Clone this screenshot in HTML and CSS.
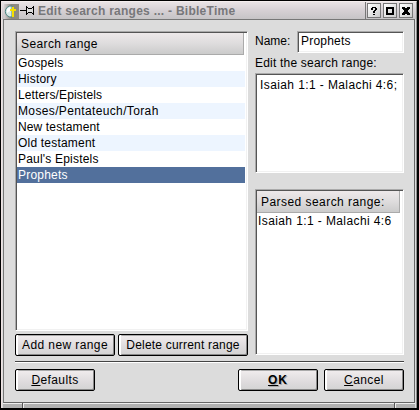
FILE: index.html
```html
<!DOCTYPE html>
<html lang="en">
<head>
<meta charset="utf-8">
<title>Edit search ranges ... - BibleTime</title>
<link rel="stylesheet" href="styles.css">
</head>
<body>
<div class="window">
  <header class="titlebar">
    <svg class="app-icon" width="15" height="15" viewBox="0 0 15 15"><defs><linearGradient id="g"><stop offset="0" stop-color="#d5d0d2"/><stop offset=".5" stop-color="#8a8880"/><stop offset="1" stop-color="#8d8a84"/></linearGradient></defs><path fill="url(#g)" d="M0 0h15v15H0z"/><path d="M8 2a5.6 5.6 0 1 0 0 11z" fill="#d9e9e7" stroke="#4d8583"/><path d="M3 5l3-2v4L3 9z" fill="#fff"/><path d="M8 3h2v10H8zM6 5h6v2H6z" fill="#f5df00" shape-rendering="crispEdges"/></svg>
    <svg class="pin" width="14" height="11" viewBox="0 0 14 11" shape-rendering="crispEdges"><path d="M0 5h6v1H0zM6 1h1v9H6zM7 2h1v1H7zM8 3h4v1H8zM7 8h1v1H7zM8 7h4v1H8zM12 2h1v1h-1zM12 8h1v1h-1zM13 1h1v9h-1z"/><path fill="#ddd" d="M7 4h6v3H7z"/></svg>
    <h1 class="title">Edit search ranges ... - BibleTime</h1>
    <div class="controls">
      <span class="control"><svg width="12" height="12" viewBox="0 0 12 12" shape-rendering="crispEdges"><path d="M4 2h4v1H4zM3 3h2v2H3zM7 3h2v2H7zM6 5h2v1H6zM5 6h2v2H5zM5 9h2v1H5z"/></svg></span>
      <span class="control"><svg width="12" height="12" viewBox="0 0 12 12" shape-rendering="crispEdges"><path fill-rule="evenodd" d="M2 2h8v8H2zM4 4v4h4V4z"/></svg></span>
      <span class="control"><svg width="12" height="12" viewBox="0 0 12 12" shape-rendering="crispEdges"><path d="M2 2h3v1h2V2h3v2H9v1H8v2h1v1h1v2H7V9H5v1H2V8h1V7h1V5H3V4H2z"/></svg></span>
    </div>
  </header>
  <main class="client">
    <div class="panels">
      <section class="left">
        <div class="sunken list ranges">
          <div class="list-head"><span class="t-head">Search range</span></div>
          <ul>
            <li><span class="t-gospels">Gospels</span></li>
            <li><span class="t-history">History</span></li>
            <li><span class="t-letters">Letters/Epistels</span></li>
            <li><span class="t-moses">Moses/Pentateuch/Torah</span></li>
            <li><span class="t-new">New testament</span></li>
            <li><span class="t-old">Old testament</span></li>
            <li><span class="t-paul">Paul's Epistels</span></li>
            <li class="selected"><span class="t-prophets">Prophets</span></li>
          </ul>
        </div>
        <div class="range-actions">
          <button class="button add"><span class="t-add">Add new range</span></button>
          <button class="button delete"><span class="t-delete">Delete current range</span></button>
        </div>
      </section>
      <section class="right">
        <div class="name-row"><span class="t-name">Name:</span><div class="sunken field"><span class="t-prophets">Prophets</span></div></div>
        <div class="edit-label"><span class="t-edit">Edit the search range:</span></div>
        <div class="sunken editor"><span class="t-isaiah">Isaiah 1:1 - Malachi 4:6;</span></div>
        <div class="sunken list parsed">
          <div class="list-head"><span class="t-parsed">Parsed search range:</span></div>
          <ul><li><span class="t-isaiah">Isaiah 1:1 - Malachi 4:6</span></li></ul>
        </div>
      </section>
    </div>
    <hr class="separator">
    <footer class="dialog-actions">
      <button class="button"><span class="t-defaults"><u>D</u>efaults</span></button>
      <button class="button ok"><span class="t-ok"><u>O</u>K</span></button>
      <button class="button"><span class="t-cancel"><u>C</u>ancel</span></button>
    </footer>
  </main>
  <div class="grip"><i></i><i></i><i></i></div>
</div>
</body>
</html>
```
FILE: styles.css
```css
* { box-sizing: border-box; }
body { margin: 0; background: #000; font: 12px/16px "Liberation Sans", Arial, sans-serif; color: #000; overflow: hidden; }
.window { width: 416px; height: 407px; margin: 1px 0 0 1px; background: #dcdcdc; border-left: 1px solid #eee2e2; border-top: 1px solid #f5eeee; border-right: 1px solid #8b8b8b; display: flex; flex-direction: column; }
.titlebar { height: 17px; flex: none; display: flex; align-items: center; background: linear-gradient(#e9e3e5, #d6d0d4 50%, #c6c4c6); padding-left: 2px; }
.app-icon { margin-top: 1px; }
.pin { margin: 0 4px 0 1px; }
.title { margin: 0; font-size: 12px; line-height: 16px; color: #77777a; letter-spacing: .26px; white-space: nowrap; }
.controls { margin-left: auto; height: 17px; border-left: 1px solid #777; display: flex; gap: 2px; padding: 1px 3px 0 1px; }
.control { width: 14px; height: 15px; border: 1px solid #777; background: linear-gradient(135deg, #fff, #ccc); display: flex; align-items: center; justify-content: center; }
.client { flex: 1; min-height: 0; margin: 0 1px 0 1px; border: 1px solid #777; border-right-color: #666; border-bottom-color: #666; padding: 11px 10px 0 11px; }
.panels { display: flex; justify-content: space-between; height: 325px; }
.left { width: 233px; }
.right { width: 149px; }
span { white-space: nowrap; }
.sunken { background: #fff; border: 1px solid #aaa; border-right-color: #fff; border-bottom-color: #fff; position: relative; box-shadow: inset 1px 1px #555, inset -1px -1px #f1f1f1; }
.list { padding: 1px 2px 2px 1px; }
.ranges { height: 300px; }
.list-head { height: 22px; margin-right: 1px; padding: 3px 0 0 4px; background: linear-gradient(#eee9ea, #dedcdd 50%, #cbcbcb); border-right: 1px solid #aaa; border-bottom: 1px solid #aaa; }
ul { list-style: none; margin: 0; padding: 0; }
li { height: 16px; padding-left: 1px; }
li:nth-child(even) { background: #edf5ff; }
li.selected { background: #52709c; color: #fff; }
.range-actions { display: flex; justify-content: space-between; margin-top: 3px; }
.button { font: inherit; width: 80px; height: 22px; padding: 0; border: 1px solid #000; border-radius: 2px; background: linear-gradient(#f1edee, #dedbdd 60%, #d3d3d3); box-shadow: inset 2px 0 #fff, inset 0 1px #aaa, inset -1px -1px #888; white-space: nowrap; line-height: 18px; color: #000; }
.add { width: 100px; }
.delete { width: 130px; }
.name-row { display: flex; justify-content: space-between; height: 22px; line-height: 21px; }
.field { width: 107px; padding-left: 3px; line-height: 19px; }
.edit-label { height: 20px; line-height: 20px; }
.editor { height: 100px; padding: 3px 0 0 4px; }
.parsed { height: 166px; margin-top: 16px; }
.separator { margin: 5px 0 0; height: 2px; border: 0; border-top: 1px solid #444; border-bottom: 1px solid #fff; }
.dialog-actions { display: flex; gap: 6px; margin-top: 6px; }
.button.ok { margin-left: auto; font-weight: bold; text-shadow: 1px 1px #aaa; }
.grip { height: 5px; flex: none; display: grid; grid-template-columns: 19px 1fr 20px; gap: 1px; background: #555; margin: 0 1px; }
.grip i { background: #b1b1b1; border-top: 1px solid #eee; }
.grip i + i { border-left: 1px solid #eee; }
span[class^="t-"] { letter-spacing: .4px; }
span.t-gospels, span.t-history, span.t-old, span.t-paul, span.t-prophets, span.t-edit { letter-spacing: .2px; }
span.t-letters, span.t-new { letter-spacing: .13px; }
span.t-moses { letter-spacing: .36px; }
span.t-name { letter-spacing: 0; }
span.t-ok { letter-spacing: 1px; }
span.t-delete { letter-spacing: .2px; }
span.t-parsed { letter-spacing: .45px; }
```
